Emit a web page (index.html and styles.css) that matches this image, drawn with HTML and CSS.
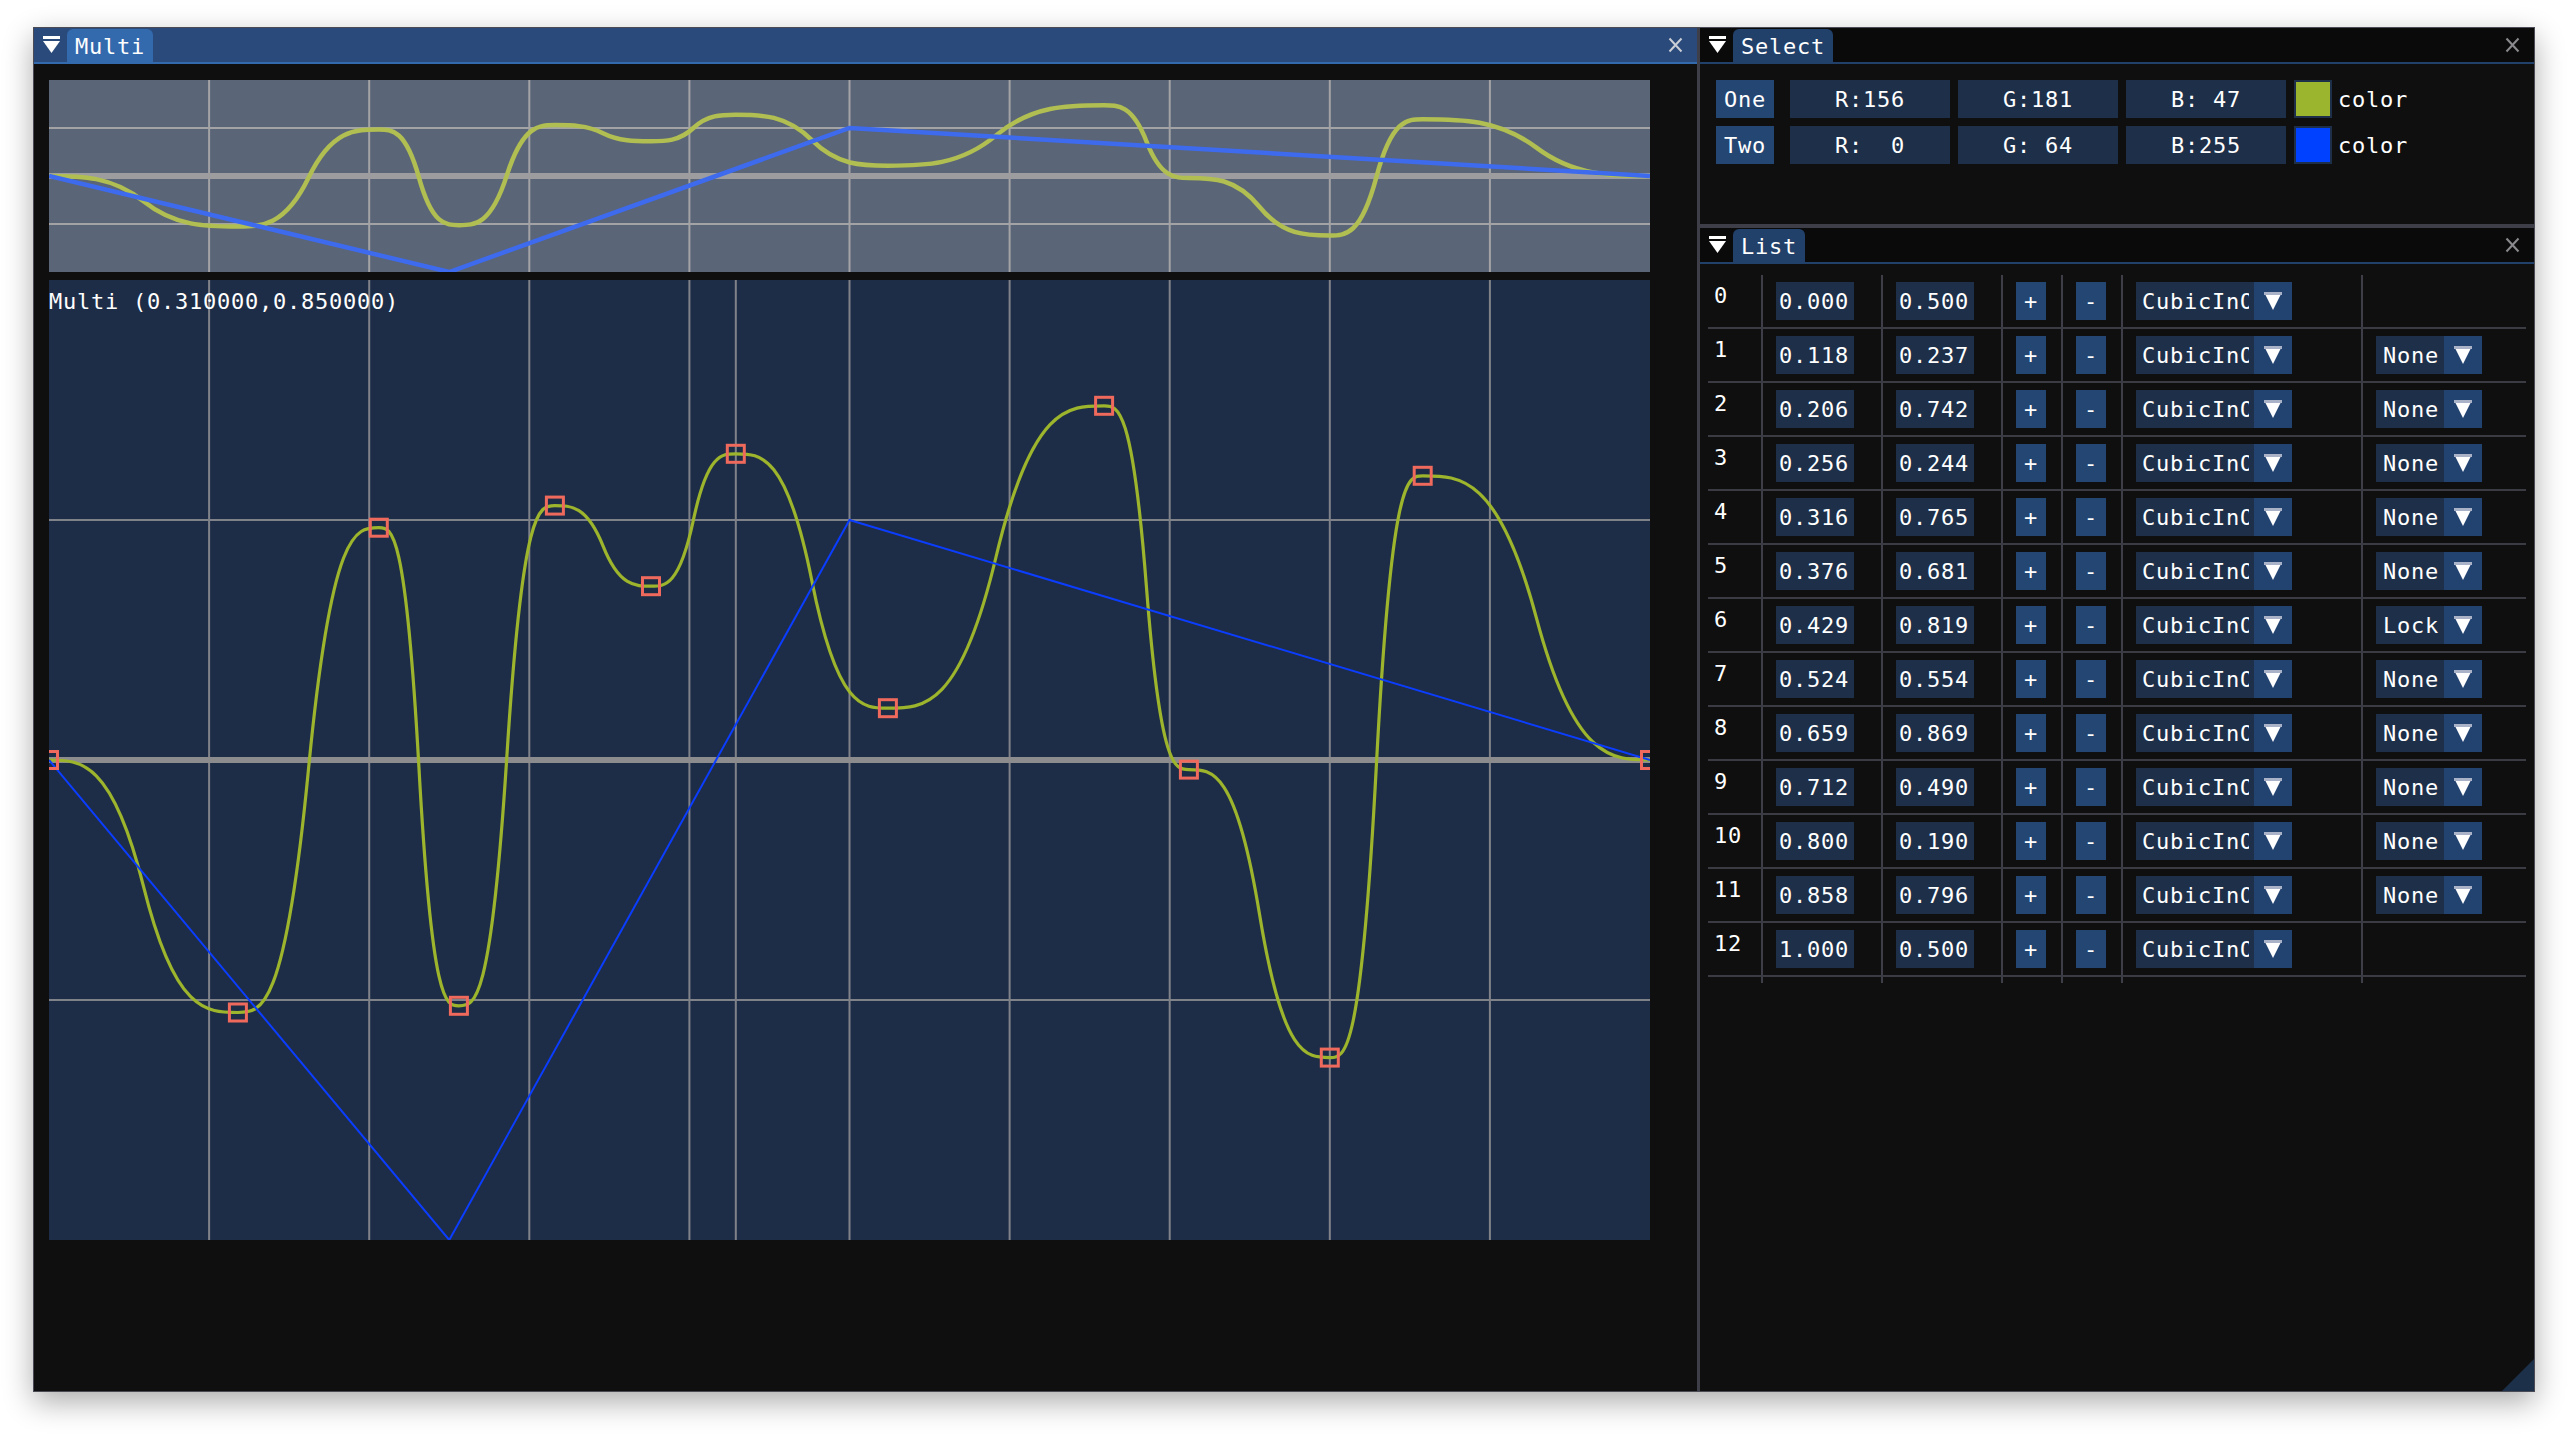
FILE: index.html
```html
<!DOCTYPE html>
<html>
<head>
<meta charset="utf-8">
<link rel="stylesheet" href="styles.css">
</head>
<body>
<div class="app">
  <section class="win multi">
    <header class="titlebar active">
      <svg class="menu-btn" width="17" height="17" viewBox="0 0 17 17"><rect x="0" y="0" width="17" height="3" fill="#fff"/><polygon points="0,5 17,5 8.5,17" fill="#fff"/></svg>
      <span class="tab">Multi</span>
      <span class="spacer"></span>
      <svg class="close" width="15" height="16" viewBox="0 0 15 16"><path d="M1.5,1.5L13.5,14.5M13.5,1.5L1.5,14.5" stroke="currentColor" stroke-width="2" fill="none"/></svg>
    </header>
    <div class="multi-body">
      <svg class="plot-top" width="1601" height="192" viewBox="0 0 1601 960" preserveAspectRatio="none">
        <path class="grid-top" vector-effect="non-scaling-stroke" d="M160.1,0V960M320.2,0V960M480.3,0V960M640.4,0V960M800.5,0V960M960.6,0V960M1120.7,0V960M1280.8,0V960M1440.9,0V960M0,240H1601M0,720H1601"/>
        <path class="mid-top" vector-effect="non-scaling-stroke" d="M0,480H1601"/>
        <path class="curve-top" vector-effect="non-scaling-stroke" d="M0,480 C31.5,480 63,480 94.5,606.3 C125.9,732.5 157.4,732.5 188.9,732.5 C212.4,732.5 235.9,732.5 259.4,490.1 C282.8,247.7 306.3,247.7 329.8,247.7 C343.2,247.7 356.5,247.7 369.9,486.8 C383.2,725.8 396.6,725.8 409.9,725.8 C425.9,725.8 441.9,725.8 457.9,475.7 C473.9,225.6 489.9,225.6 505.9,225.6 C521.9,225.6 537.9,225.6 554,265.9 C570,306.2 586,306.2 602,306.2 C616.1,306.2 630.3,306.2 644.4,240 C658.5,173.8 672.7,173.8 686.8,173.8 C712.2,173.8 737.5,173.8 762.9,301 C788.2,428.2 813.6,428.2 838.9,428.2 C874.9,428.2 911,428.2 947,277 C983,125.8 1019.1,125.8 1055.1,125.8 C1069.2,125.8 1083.4,125.8 1097.5,307.7 C1111.6,489.6 1125.8,489.6 1139.9,489.6 C1163.4,489.6 1186.9,489.6 1210.4,633.6 C1233.8,777.6 1257.3,777.6 1280.8,777.6 C1296.3,777.6 1311.8,777.6 1327.3,486.7 C1342.7,195.8 1358.2,195.8 1373.7,195.8 C1411.6,195.8 1449.5,195.8 1487.4,337.9 C1525.2,480 1563.1,480 1601,480"/>
        <path class="line-top" vector-effect="non-scaling-stroke" d="M0,480 L400.25,960 L800.5,240 L1601,480"/>
      </svg>
      <div class="plot-main">
        <svg class="plot-svg" width="1601" height="960" viewBox="0 0 1601 960">
          <path class="grid-main" d="M160.1,0V960M320.2,0V960M480.3,0V960M640.4,0V960M686.8,0V960M800.5,0V960M960.6,0V960M1120.7,0V960M1280.8,0V960M1440.9,0V960M0,240H1601M0,720H1601"/>
          <path class="mid-main" d="M0,480H1601"/>
          <path class="curve-main" d="M0,480 C31.5,480 63,480 94.5,606.3 C125.9,732.5 157.4,732.5 188.9,732.5 C212.4,732.5 235.9,732.5 259.4,490.1 C282.8,247.7 306.3,247.7 329.8,247.7 C343.2,247.7 356.5,247.7 369.9,486.8 C383.2,725.8 396.6,725.8 409.9,725.8 C425.9,725.8 441.9,725.8 457.9,475.7 C473.9,225.6 489.9,225.6 505.9,225.6 C521.9,225.6 537.9,225.6 554,265.9 C570,306.2 586,306.2 602,306.2 C616.1,306.2 630.3,306.2 644.4,240 C658.5,173.8 672.7,173.8 686.8,173.8 C712.2,173.8 737.5,173.8 762.9,301 C788.2,428.2 813.6,428.2 838.9,428.2 C874.9,428.2 911,428.2 947,277 C983,125.8 1019.1,125.8 1055.1,125.8 C1069.2,125.8 1083.4,125.8 1097.5,307.7 C1111.6,489.6 1125.8,489.6 1139.9,489.6 C1163.4,489.6 1186.9,489.6 1210.4,633.6 C1233.8,777.6 1257.3,777.6 1280.8,777.6 C1296.3,777.6 1311.8,777.6 1327.3,486.7 C1342.7,195.8 1358.2,195.8 1373.7,195.8 C1411.6,195.8 1449.5,195.8 1487.4,337.9 C1525.2,480 1563.1,480 1601,480"/>
          <path class="line-main" d="M0,480 L400.25,960 L800.5,240 L1601,480"/>
          <g class="markers">
            <rect x="-8.5" y="471.5" width="17" height="17"/>
            <rect x="180.4" y="724" width="17" height="17"/>
            <rect x="321.3" y="239.2" width="17" height="17"/>
            <rect x="401.4" y="717.3" width="17" height="17"/>
            <rect x="497.4" y="217.1" width="17" height="17"/>
            <rect x="593.5" y="297.7" width="17" height="17"/>
            <rect x="678.3" y="165.3" width="17" height="17"/>
            <rect x="830.4" y="419.7" width="17" height="17"/>
            <rect x="1046.6" y="117.3" width="17" height="17"/>
            <rect x="1131.4" y="481.1" width="17" height="17"/>
            <rect x="1272.3" y="769.1" width="17" height="17"/>
            <rect x="1365.2" y="187.3" width="17" height="17"/>
            <rect x="1592.5" y="471.5" width="17" height="17"/>
          </g>
        </svg>
        <div class="plot-label">Multi (0.310000,0.850000)</div>
      </div>
    </div>
  </section>

  <div class="right">
    <section class="win select">
      <header class="titlebar">
        <svg class="menu-btn" width="17" height="17" viewBox="0 0 17 17"><rect x="0" y="0" width="17" height="3" fill="#fff"/><polygon points="0,5 17,5 8.5,17" fill="#fff"/></svg>
        <span class="tab">Select</span>
        <span class="spacer"></span>
        <svg class="close dim" width="15" height="16" viewBox="0 0 15 16"><path d="M1.5,1.5L13.5,14.5M13.5,1.5L1.5,14.5" stroke="currentColor" stroke-width="2" fill="none"/></svg>
      </header>
      <div class="select-body">
        <div class="sel-row">
          <span class="btn">One</span>
          <span class="drag">R:156</span>
          <span class="drag">G:181</span>
          <span class="drag">B: 47</span>
          <span class="swatch swatch-one"></span>
          <span class="swatch-label">color</span>
        </div>
        <div class="sel-row">
          <span class="btn">Two</span>
          <span class="drag">R:  0</span>
          <span class="drag">G: 64</span>
          <span class="drag">B:255</span>
          <span class="swatch swatch-two"></span>
          <span class="swatch-label">color</span>
        </div>
      </div>
    </section>

    <section class="win list">
      <header class="titlebar">
        <svg class="menu-btn" width="17" height="17" viewBox="0 0 17 17"><rect x="0" y="0" width="17" height="3" fill="#fff"/><polygon points="0,5 17,5 8.5,17" fill="#fff"/></svg>
        <span class="tab">List</span>
        <span class="spacer"></span>
        <svg class="close dim" width="15" height="16" viewBox="0 0 15 16"><path d="M1.5,1.5L13.5,14.5M13.5,1.5L1.5,14.5" stroke="currentColor" stroke-width="2" fill="none"/></svg>
      </header>
      <div class="table">
        <div class="row"><div class="idx">0</div><div><span class="val">0.000</span></div><div><span class="val">0.500</span></div><div><span class="pm">+</span></div><div><span class="pm">-</span></div><div><span class="combo"><span class="txt"><span>CubicInOut</span></span><span class="arr"><svg width="18" height="18" viewBox="0 0 18 18"><polygon points="0,0 18,0 9,18" fill="#fff"/><rect width="18" height="3" fill="#a9b2c6"/></svg></span></span></div><div></div></div>
        <div class="row"><div class="idx">1</div><div><span class="val">0.118</span></div><div><span class="val">0.237</span></div><div><span class="pm">+</span></div><div><span class="pm">-</span></div><div><span class="combo"><span class="txt"><span>CubicInOut</span></span><span class="arr"><svg width="18" height="18" viewBox="0 0 18 18"><polygon points="0,0 18,0 9,18" fill="#fff"/><rect width="18" height="3" fill="#a9b2c6"/></svg></span></span></div><div><span class="combo small"><span class="txt">None</span><span class="arr"><svg width="18" height="18" viewBox="0 0 18 18"><polygon points="0,0 18,0 9,18" fill="#fff"/><rect width="18" height="3" fill="#a9b2c6"/></svg></span></span></div></div>
        <div class="row"><div class="idx">2</div><div><span class="val">0.206</span></div><div><span class="val">0.742</span></div><div><span class="pm">+</span></div><div><span class="pm">-</span></div><div><span class="combo"><span class="txt"><span>CubicInOut</span></span><span class="arr"><svg width="18" height="18" viewBox="0 0 18 18"><polygon points="0,0 18,0 9,18" fill="#fff"/><rect width="18" height="3" fill="#a9b2c6"/></svg></span></span></div><div><span class="combo small"><span class="txt">None</span><span class="arr"><svg width="18" height="18" viewBox="0 0 18 18"><polygon points="0,0 18,0 9,18" fill="#fff"/><rect width="18" height="3" fill="#a9b2c6"/></svg></span></span></div></div>
        <div class="row"><div class="idx">3</div><div><span class="val">0.256</span></div><div><span class="val">0.244</span></div><div><span class="pm">+</span></div><div><span class="pm">-</span></div><div><span class="combo"><span class="txt"><span>CubicInOut</span></span><span class="arr"><svg width="18" height="18" viewBox="0 0 18 18"><polygon points="0,0 18,0 9,18" fill="#fff"/><rect width="18" height="3" fill="#a9b2c6"/></svg></span></span></div><div><span class="combo small"><span class="txt">None</span><span class="arr"><svg width="18" height="18" viewBox="0 0 18 18"><polygon points="0,0 18,0 9,18" fill="#fff"/><rect width="18" height="3" fill="#a9b2c6"/></svg></span></span></div></div>
        <div class="row"><div class="idx">4</div><div><span class="val">0.316</span></div><div><span class="val">0.765</span></div><div><span class="pm">+</span></div><div><span class="pm">-</span></div><div><span class="combo"><span class="txt"><span>CubicInOut</span></span><span class="arr"><svg width="18" height="18" viewBox="0 0 18 18"><polygon points="0,0 18,0 9,18" fill="#fff"/><rect width="18" height="3" fill="#a9b2c6"/></svg></span></span></div><div><span class="combo small"><span class="txt">None</span><span class="arr"><svg width="18" height="18" viewBox="0 0 18 18"><polygon points="0,0 18,0 9,18" fill="#fff"/><rect width="18" height="3" fill="#a9b2c6"/></svg></span></span></div></div>
        <div class="row"><div class="idx">5</div><div><span class="val">0.376</span></div><div><span class="val">0.681</span></div><div><span class="pm">+</span></div><div><span class="pm">-</span></div><div><span class="combo"><span class="txt"><span>CubicInOut</span></span><span class="arr"><svg width="18" height="18" viewBox="0 0 18 18"><polygon points="0,0 18,0 9,18" fill="#fff"/><rect width="18" height="3" fill="#a9b2c6"/></svg></span></span></div><div><span class="combo small"><span class="txt">None</span><span class="arr"><svg width="18" height="18" viewBox="0 0 18 18"><polygon points="0,0 18,0 9,18" fill="#fff"/><rect width="18" height="3" fill="#a9b2c6"/></svg></span></span></div></div>
        <div class="row"><div class="idx">6</div><div><span class="val">0.429</span></div><div><span class="val">0.819</span></div><div><span class="pm">+</span></div><div><span class="pm">-</span></div><div><span class="combo"><span class="txt"><span>CubicInOut</span></span><span class="arr"><svg width="18" height="18" viewBox="0 0 18 18"><polygon points="0,0 18,0 9,18" fill="#fff"/><rect width="18" height="3" fill="#a9b2c6"/></svg></span></span></div><div><span class="combo small"><span class="txt">Lock</span><span class="arr"><svg width="18" height="18" viewBox="0 0 18 18"><polygon points="0,0 18,0 9,18" fill="#fff"/><rect width="18" height="3" fill="#a9b2c6"/></svg></span></span></div></div>
        <div class="row"><div class="idx">7</div><div><span class="val">0.524</span></div><div><span class="val">0.554</span></div><div><span class="pm">+</span></div><div><span class="pm">-</span></div><div><span class="combo"><span class="txt"><span>CubicInOut</span></span><span class="arr"><svg width="18" height="18" viewBox="0 0 18 18"><polygon points="0,0 18,0 9,18" fill="#fff"/><rect width="18" height="3" fill="#a9b2c6"/></svg></span></span></div><div><span class="combo small"><span class="txt">None</span><span class="arr"><svg width="18" height="18" viewBox="0 0 18 18"><polygon points="0,0 18,0 9,18" fill="#fff"/><rect width="18" height="3" fill="#a9b2c6"/></svg></span></span></div></div>
        <div class="row"><div class="idx">8</div><div><span class="val">0.659</span></div><div><span class="val">0.869</span></div><div><span class="pm">+</span></div><div><span class="pm">-</span></div><div><span class="combo"><span class="txt"><span>CubicInOut</span></span><span class="arr"><svg width="18" height="18" viewBox="0 0 18 18"><polygon points="0,0 18,0 9,18" fill="#fff"/><rect width="18" height="3" fill="#a9b2c6"/></svg></span></span></div><div><span class="combo small"><span class="txt">None</span><span class="arr"><svg width="18" height="18" viewBox="0 0 18 18"><polygon points="0,0 18,0 9,18" fill="#fff"/><rect width="18" height="3" fill="#a9b2c6"/></svg></span></span></div></div>
        <div class="row"><div class="idx">9</div><div><span class="val">0.712</span></div><div><span class="val">0.490</span></div><div><span class="pm">+</span></div><div><span class="pm">-</span></div><div><span class="combo"><span class="txt"><span>CubicInOut</span></span><span class="arr"><svg width="18" height="18" viewBox="0 0 18 18"><polygon points="0,0 18,0 9,18" fill="#fff"/><rect width="18" height="3" fill="#a9b2c6"/></svg></span></span></div><div><span class="combo small"><span class="txt">None</span><span class="arr"><svg width="18" height="18" viewBox="0 0 18 18"><polygon points="0,0 18,0 9,18" fill="#fff"/><rect width="18" height="3" fill="#a9b2c6"/></svg></span></span></div></div>
        <div class="row"><div class="idx">10</div><div><span class="val">0.800</span></div><div><span class="val">0.190</span></div><div><span class="pm">+</span></div><div><span class="pm">-</span></div><div><span class="combo"><span class="txt"><span>CubicInOut</span></span><span class="arr"><svg width="18" height="18" viewBox="0 0 18 18"><polygon points="0,0 18,0 9,18" fill="#fff"/><rect width="18" height="3" fill="#a9b2c6"/></svg></span></span></div><div><span class="combo small"><span class="txt">None</span><span class="arr"><svg width="18" height="18" viewBox="0 0 18 18"><polygon points="0,0 18,0 9,18" fill="#fff"/><rect width="18" height="3" fill="#a9b2c6"/></svg></span></span></div></div>
        <div class="row"><div class="idx">11</div><div><span class="val">0.858</span></div><div><span class="val">0.796</span></div><div><span class="pm">+</span></div><div><span class="pm">-</span></div><div><span class="combo"><span class="txt"><span>CubicInOut</span></span><span class="arr"><svg width="18" height="18" viewBox="0 0 18 18"><polygon points="0,0 18,0 9,18" fill="#fff"/><rect width="18" height="3" fill="#a9b2c6"/></svg></span></span></div><div><span class="combo small"><span class="txt">None</span><span class="arr"><svg width="18" height="18" viewBox="0 0 18 18"><polygon points="0,0 18,0 9,18" fill="#fff"/><rect width="18" height="3" fill="#a9b2c6"/></svg></span></span></div></div>
        <div class="row"><div class="idx">12</div><div><span class="val">1.000</span></div><div><span class="val">0.500</span></div><div><span class="pm">+</span></div><div><span class="pm">-</span></div><div><span class="combo"><span class="txt"><span>CubicInOut</span></span><span class="arr"><svg width="18" height="18" viewBox="0 0 18 18"><polygon points="0,0 18,0 9,18" fill="#fff"/><rect width="18" height="3" fill="#a9b2c6"/></svg></span></span></div><div></div></div>
        <div class="row end"><div class="idx"></div><div></div><div></div><div></div><div></div><div></div><div></div></div>
      </div>
      <span class="grip"></span>
    </section>
  </div>
</div>
</body>
</html>
```

FILE: styles.css
```css
* { box-sizing: border-box; }
html, body { margin: 0; padding: 0; background: #ffffff; }
body {
  width: 2568px;
  height: 1434px;
  overflow: hidden;
  font-family: "DejaVu Sans Mono", "Liberation Mono", monospace;
  font-size: 22px;
  line-height: 26px;
  letter-spacing: 0.76px;
  color: #ffffff;
}

.app {
  margin: 27px 0 0 33px;
  width: 2502px;
  height: 1365px;
  border: 1px solid #4b4b56;
  background: #3e3e48;
  display: flex;
  gap: 3px;
  box-shadow: 0 10px 28px rgba(0, 0, 0, 0.33);
}

.win { display: flex; flex-direction: column; background: #0f0f0f; }
.multi { width: 1663px; }
.right { width: 834px; display: flex; flex-direction: column; gap: 4px; }
.select { height: 196px; flex: none; }
.list { flex: 1; position: relative; }

/* title bars */
.titlebar {
  height: 36px;
  flex: none;
  display: flex;
  align-items: flex-start;
  background: #0a0a0a;
  border-bottom: 2px solid #22416a;
}
.titlebar.active { background: #294a7a; border-bottom-color: #3369ad; }
.menu-btn { flex: none; margin: 8px 0 0 9px; display: block; }
.tab {
  margin: 1px 0 0 7px;
  height: 33px;
  padding: 5px 8px 0 8px;
  border-radius: 6px 6px 0 0;
  background: #22416a;
  white-space: pre;
}
.active .tab { background: #3369ad; }
.spacer { flex: 1; }
.close { flex: none; margin: 9px 14px 0 0; display: block; color: #c9cdd6; }
.close.dim { color: #8a8a8e; }

/* multi window */
.multi-body {
  padding: 16px 0 0 15px;
  display: flex;
  flex-direction: column;
  gap: 8px;
}
.plot-top { display: block; background: #5a6577; }
.grid-top { stroke: #a3a3a6; stroke-width: 2; fill: none; }
.mid-top { stroke: #9d9d9f; stroke-width: 6; fill: none; }
.curve-top { stroke: #b0be52; stroke-width: 4.5; fill: none; }
.line-top { stroke: #3e6bee; stroke-width: 4.5; fill: none; }

.plot-main { position: relative; width: 1601px; height: 960px; background: #1e2d47; }
.plot-svg { display: block; }
.grid-main { stroke: #808289; stroke-width: 2; fill: none; }
.mid-main { stroke: #8c8c8e; stroke-width: 6; fill: none; }
.curve-main { stroke: #9db52c; stroke-width: 3.2; fill: none; }
.line-main { stroke: #0b3dff; stroke-width: 2; fill: none; }
.markers rect { fill: none; stroke: #ef6a5c; stroke-width: 3; }
.plot-label { position: absolute; left: 0; top: 9px; white-space: pre; }

/* select window */
.select-body {
  padding: 16px;
  display: flex;
  flex-direction: column;
  gap: 8px;
}
.sel-row { display: flex; align-items: flex-start; height: 38px; }
.btn {
  height: 38px;
  padding: 7px 8px 0 8px;
  background: #244673;
  margin-right: 16px;
}
.drag {
  width: 160px;
  height: 38px;
  padding-top: 7px;
  background: #1d2f49;
  text-align: center;
  white-space: pre;
}
.drag + .drag { margin-left: 8px; }
.swatch {
  width: 38px;
  height: 38px;
  margin-left: 8px;
  border: 2px solid #1d2f49;
}
.swatch-one { background: #9cb52f; }
.swatch-two { background: #0040ff; }
.swatch-label { margin-left: 6px; padding-top: 7px; }

/* list window */
.table { margin: 11px 8px 0 8px; }
.row {
  display: grid;
  grid-template-columns: 53px 120px 120px 60px 60px 240px 165px;
  height: 54px;
  border-bottom: 2px solid #3b3b44;
}
.row > div {
  padding: 7px 0 0 13px;
  border-left: 2px solid #3e3e48;
}
.row > div.idx { border-left: none; padding: 8px 0 0 6px; }
.row.end { height: 6px; border-bottom: none; }
.row.end > div, .row.end > div.idx { padding: 0; }

.val {
  display: block;
  width: 78px;
  height: 38px;
  padding: 7px 0 0 3px;
  background: #1d2f49;
}
.pm {
  display: block;
  width: 30px;
  height: 38px;
  padding-top: 7px;
  background: #244673;
  text-align: center;
}
.combo {
  display: flex;
  width: 156px;
  height: 38px;
  background: #1d2f49;
}
.combo .txt {
  width: 118px;
  padding: 7px 0 0 6px;
  white-space: nowrap;
}
.combo .txt span { display: block; width: 107px; overflow: hidden; }
.combo.small { width: 106px; }
.combo.small .txt { width: 68px; padding-left: 7px; }
.arr {
  width: 38px;
  flex: none;
  background: #224270;
  display: flex;
  justify-content: center;
  padding-top: 10px;
}
.arr svg { display: block; }

.grip {
  position: absolute;
  right: 0;
  bottom: 0;
  width: 32px;
  height: 32px;
  background: #1c3149;
  clip-path: polygon(100% 0, 100% 100%, 0 100%);
}
```
